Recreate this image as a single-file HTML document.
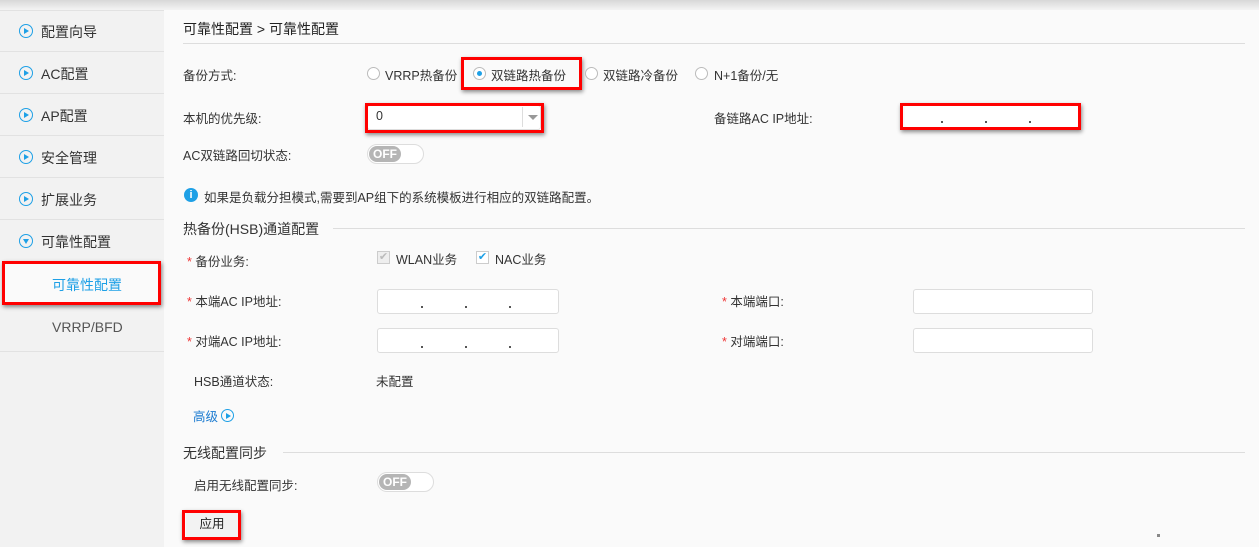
<!DOCTYPE html>
<html><head><meta charset="utf-8"><style>
*{margin:0;padding:0;box-sizing:border-box}
body{width:1259px;height:547px;overflow:hidden;background:#fafafa;font-family:"Liberation Sans","Noto Sans CJK SC",sans-serif;font-size:12.5px;color:#333;position:relative}
.a{position:absolute;white-space:nowrap}
.t{margin-top:-3px}
.top{position:absolute;left:0;top:0;width:1259px;height:10px;background:linear-gradient(#d8d8d8,#f4f4f4)}
.side{position:absolute;left:0;top:10px;width:164px;height:537px;background:#f2f2f2}
.sep{position:absolute;left:0;width:164px;height:1px;background:#e2e2e2}
.si{position:absolute;left:41px;font-size:14px;color:#333}
.ic{position:absolute;left:19px;width:14px;height:14px;border:1.5px solid #1ea0e6;border-radius:50%}
.ic:after{content:"";position:absolute;left:4px;top:2.5px;border-left:5px solid #1ea0e6;border-top:3.5px solid transparent;border-bottom:3.5px solid transparent}
.ic.d:after{left:2.5px;top:4px;border-top:5px solid #1ea0e6;border-left:3.5px solid transparent;border-right:3.5px solid transparent;border-bottom:0}
.red{position:absolute;border:3px solid #f00;box-shadow:1px 2px 4px rgba(0,0,0,.45)}
.radio{position:absolute;width:13px;height:13px;border:1px solid #bbb;border-radius:50%;background:#fff}
.in{position:absolute;background:#fff;border:1px solid #ddd;border-radius:3px}
.dot{position:absolute;width:2px;height:2px;background:#555}
.tog{position:absolute;width:57px;height:20px;border:1px solid #ddd;border-radius:10px;background:#fff}
.tog span{position:absolute;left:1px;top:1px;width:32px;height:16px;border-radius:8px;background:#b5b5b5;color:#fff;font-size:12px;font-weight:bold;line-height:16px;text-align:center}
.line{position:absolute;height:1px;background:#ddd}
.st{color:#e33}
</style></head><body>
<div class="top"></div>
<div class="side"></div>
<div class="sep" style="top:10px"></div><div class="sep" style="top:51px"></div><div class="sep" style="top:93px"></div><div class="sep" style="top:135px"></div><div class="sep" style="top:177px"></div><div class="sep" style="top:219px"></div><div class="sep" style="top:351px"></div>
<div class="ic" style="top:24px"></div><div class="si" style="top:22px">配置向导</div>
<div class="ic" style="top:66px"></div><div class="si" style="top:64px">AC配置</div>
<div class="ic" style="top:108px"></div><div class="si" style="top:106px">AP配置</div>
<div class="ic" style="top:150px"></div><div class="si" style="top:148px">安全管理</div>
<div class="ic" style="top:192px"></div><div class="si" style="top:190px">扩展业务</div>
<div class="ic d" style="top:234px"></div><div class="si" style="top:232px">可靠性配置</div>
<div class="a" style="left:4px;top:263px;width:155px;height:42px;background:#fafafa"></div>
<div class="red" style="left:2px;top:261px;width:159px;height:44px"></div>
<div class="si" style="left:52px;top:275px;color:#1ea0e6">可靠性配置</div>
<div class="si" style="left:52px;top:319px;color:#555">VRRP/BFD</div>

<div class="a" style="left:183px;top:19px;font-size:14px;color:#222">可靠性配置 &gt; 可靠性配置</div>
<div class="line" style="left:183px;top:43px;width:1062px"></div>

<div class="a t" style="left:183px;top:68px">备份方式:</div>
<div class="radio" style="left:367px;top:67px"></div><div class="a t" style="left:385px;top:68px">VRRP热备份</div>
<div class="radio" style="left:473px;top:67px"></div><div class="a" style="left:477px;top:71px;width:5px;height:5px;border-radius:50%;background:#1ea0e6"></div>
<div class="a t" style="left:491px;top:68px">双链路热备份</div>
<div class="red" style="left:461px;top:57px;width:121px;height:33px"></div>
<div class="radio" style="left:585px;top:67px"></div><div class="a t" style="left:603px;top:68px">双链路冷备份</div>
<div class="radio" style="left:695px;top:67px"></div><div class="a t" style="left:714px;top:68px">N+1备份/无</div>

<div class="a t" style="left:183px;top:111px">本机的优先级:</div>
<div class="in" style="left:367px;top:105px;width:174px;height:25px"></div>
<div class="a" style="left:522px;top:107px;width:1px;height:20px;background:#ddd"></div>
<div class="a" style="left:528px;top:115px;border-top:5px solid #999;border-left:5px solid transparent;border-right:5px solid transparent"></div>
<div class="a t" style="left:376px;top:112px">0</div>
<div class="red" style="left:365px;top:103px;width:179px;height:30px"></div>
<div class="a t" style="left:714px;top:111px">备链路AC IP地址:</div>
<div class="in" style="left:905px;top:105px;width:173px;height:22px;border:0"></div>
<div class="dot" style="left:941px;top:121px"></div><div class="dot" style="left:985px;top:121px"></div><div class="dot" style="left:1029px;top:121px"></div>
<div class="red" style="left:900px;top:103px;width:181px;height:27px"></div>

<div class="a t" style="left:183px;top:148px">AC双链路回切状态:</div>
<div class="tog" style="left:367px;top:144px"><span>OFF</span></div>

<div class="a" style="left:184px;top:188px;width:14px;height:14px;border-radius:50%;background:#1ea0e6;color:#fff;font-size:11px;font-weight:bold;text-align:center;line-height:14px">i</div>
<div class="a t" style="left:204px;top:190px">如果是负载分担模式,需要到AP组下的系统模板进行相应的双链路配置。</div>

<div class="a t" style="left:183px;top:222px;font-size:14px">热备份(HSB)通道配置</div>
<div class="line" style="left:333px;top:228px;width:912px"></div>

<div class="a t" style="left:187px;top:254px"><span class="st">*</span> 备份业务:</div>
<div class="a" style="left:377px;top:251px;width:13px;height:13px;border:1px solid #ccc;background:#eee;color:#bbb;font-size:11px;line-height:11px;text-align:center">✔</div>
<div class="a t" style="left:396px;top:252px">WLAN业务</div>
<div class="a" style="left:476px;top:251px;width:13px;height:13px;border:1px solid #ccc;background:#fff;color:#1ea0e6;font-size:11px;line-height:11px;text-align:center">✔</div>
<div class="a t" style="left:495px;top:252px">NAC业务</div>

<div class="a t" style="left:187px;top:294px"><span class="st">*</span> 本端AC IP地址:</div>
<div class="in" style="left:377px;top:289px;width:182px;height:25px"></div>
<div class="dot" style="left:421px;top:306px"></div><div class="dot" style="left:465px;top:306px"></div><div class="dot" style="left:509px;top:306px"></div>
<div class="a t" style="left:722px;top:294px"><span class="st">*</span> 本端端口:</div>
<div class="in" style="left:913px;top:289px;width:180px;height:25px"></div>

<div class="a t" style="left:187px;top:334px"><span class="st">*</span> 对端AC IP地址:</div>
<div class="in" style="left:377px;top:328px;width:182px;height:25px"></div>
<div class="dot" style="left:421px;top:346px"></div><div class="dot" style="left:465px;top:346px"></div><div class="dot" style="left:509px;top:346px"></div>
<div class="a t" style="left:722px;top:334px"><span class="st">*</span> 对端端口:</div>
<div class="in" style="left:913px;top:328px;width:180px;height:25px"></div>

<div class="a t" style="left:194px;top:374px">HSB通道状态:</div>
<div class="a t" style="left:376px;top:374px">未配置</div>
<div class="a t" style="left:193px;top:409px;color:#1a7ad0">高级</div>
<div class="ic" style="left:221px;top:409px;width:13px;height:13px"></div>

<div class="a t" style="left:183px;top:446px;font-size:14px">无线配置同步</div>
<div class="line" style="left:283px;top:452px;width:962px"></div>
<div class="a t" style="left:194px;top:478px">启用无线配置同步:</div>
<div class="tog" style="left:377px;top:472px"><span>OFF</span></div>

<div class="a" style="left:186px;top:513px;width:52px;height:24px;background:#f2f2f2;text-align:center;line-height:22px;color:#222">应用</div>
<div class="red" style="left:182px;top:510px;width:59px;height:30px"></div>
<div class="dot" style="left:1157px;top:534px;width:3px;height:3px;background:#888"></div>
</body></html>
